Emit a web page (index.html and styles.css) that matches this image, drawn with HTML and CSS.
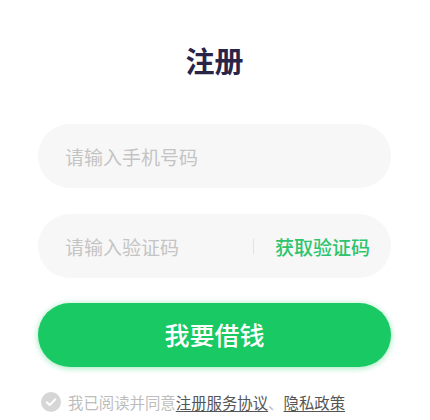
FILE: index.html
```html
<!DOCTYPE html>
<html lang="zh-CN">
<head>
<meta charset="utf-8">
<title>注册</title>
<link rel="stylesheet" href="styles.css">
</head>
<body>
<div class="page">
  <h1 class="title">注册</h1>
  <div class="field">
    <span class="placeholder">请输入手机号码</span>
  </div>
  <div class="field field-code">
    <span class="placeholder">请输入验证码</span>
    <span class="divider"></span>
    <span class="get-code">获取验证码</span>
  </div>
  <button class="submit">我要借钱</button>
  <div class="agree">
    <span class="check">
      <svg width="20" height="20" viewBox="0 0 20 20"><circle cx="10" cy="10" r="10" fill="#d6d6d6"/><path d="M5.8 10.2 L8.8 13 L14.2 7.4" fill="none" stroke="#fff" stroke-width="2" stroke-linecap="round" stroke-linejoin="round"/></svg>
    </span>
    <span class="agree-text">我已阅读并同意<a class="link">注册服务协议</a>、<a class="link">隐私政策</a></span>
  </div>
</div>
</body>
</html>
```
FILE: styles.css
```css
html, body {
  margin: 0;
  padding: 0;
  background: #ffffff;
}
body {
  font-family: "Noto Sans CJK SC", "Noto Sans", sans-serif;
}
.page {
  padding: 46px 39px 0 38px;
  display: flex;
  flex-direction: column;
}
.title {
  margin: 0;
  font-size: 29px;
  line-height: 28px;
  font-weight: 700;
  color: #2a2548;
  text-align: center;
}
.field {
  margin-top: 50px;
  height: 64px;
  border-radius: 32px;
  background: #f7f7f7;
  display: flex;
  align-items: center;
  padding: 0 21px 0 27px;
}
.field-code {
  margin-top: 26px;
}
.placeholder {
  font-size: 19px;
  color: #c4c4c4;
  flex: 1;
}
.divider {
  width: 1px;
  height: 15px;
  background: #e2e2e2;
  margin-right: 21px;
}
.get-code {
  font-size: 19px;
  color: #2ec46e;
  font-weight: 500;
}
.submit {
  margin-top: 25px;
  height: 64px;
  border: none;
  border-radius: 32px;
  background: #18c964;
  color: #ffffff;
  font-family: inherit;
  font-size: 25px;
  font-weight: 500;
  box-shadow: 0 1px 6px rgba(24, 201, 100, 0.45);
  padding: 0 0 3px;
}
.agree {
  margin-top: 25px;
  display: flex;
  align-items: center;
  padding-left: 3px;
}
.check {
  width: 20px;
  height: 20px;
  display: flex;
  margin-right: 7px;
}
.agree-text {
  font-size: 15.4px;
  color: #bdbdbd;
  white-space: nowrap;
  line-height: 20px;
}
.link {
  color: #555555;
  text-decoration: underline;
  text-underline-offset: 2px;
}
```
